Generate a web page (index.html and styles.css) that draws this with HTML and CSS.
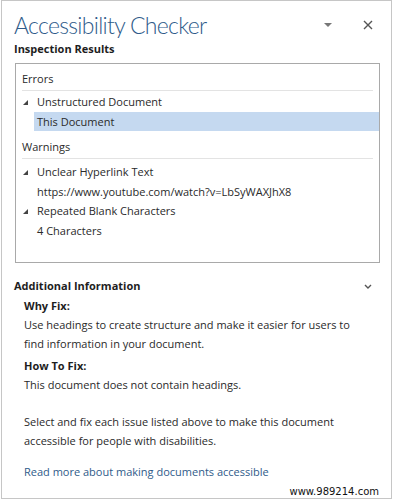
FILE: index.html
```html
<!DOCTYPE html>
<html>
<head>
<meta charset="utf-8">
<link rel="stylesheet" href="styles.css">
</head>
<body>
<div class="pane">
  <div class="header">
    <div class="title">Accessibility Checker</div>
    <div class="ctrls">
      <svg class="drop" width="10" height="6" viewBox="0 0 10 6"><path d="M1 1 L9 1 L5 5 Z" fill="#777"/></svg>
      <svg class="close" width="10" height="10" viewBox="0 0 10 10"><path d="M1 1 L9 9 M9 1 L1 9" stroke="#555" stroke-width="1.4"/></svg>
    </div>
  </div>
  <div class="section-title">Inspection Results</div>
  <div class="listbox">
    <div class="group">Errors</div>
    <div class="item"><span class="tri"></span>Unstructured Document</div>
    <div class="sub selected">This Document</div>
    <div class="group warn">Warnings</div>
    <div class="item"><span class="tri"></span>Unclear Hyperlink Text</div>
    <div class="sub">https://www.youtube.com/watch?v=LbSyWAXJhX8</div>
    <div class="item"><span class="tri"></span>Repeated Blank Characters</div>
    <div class="sub">4 Characters</div>
  </div>
  <div class="info-head">
    <div class="section-title">Additional Information</div>
    <svg class="chev" width="8" height="5" viewBox="0 0 8 5"><path d="M1 1 L4 4 L7 1" stroke="#555" stroke-width="1.4" fill="none"/></svg>
  </div>
  <div class="info">
    <div class="label first">Why Fix:</div>
    <p>Use headings to create structure and make it easier for users to find information in your document.</p>
    <div class="label">How To Fix:</div>
    <p>This document does not contain headings.</p>
    <p class="gap">Select and fix each issue listed above to make this document accessible for people with disabilities.</p>
    <a class="link">Read more about making documents accessible</a>
  </div>
  <div class="wm">www.989214.com</div>
</div>
</body>
</html>
```
FILE: styles.css
```css
html, body { margin: 0; padding: 0; background: #fff; }
body { width: 393px; height: 500px; overflow: hidden; }
.pane {
  box-sizing: border-box;
  width: 391px;
  height: 499px;
  margin-left: 1px;
  border: 1px solid #c6c6c6;
  font-family: "Open Sans", sans-serif;
  font-size: 11px;
  color: #2a2a2a;
  position: relative;
}
.header {
  display: flex;
  justify-content: space-between;
  align-items: flex-start;
  padding: 0 18px 0 12px;
  height: 29px;
  margin-top: 10px;
}
.title {
  font-family: Lato, sans-serif;
  font-weight: 300;
  font-size: 23px;
  letter-spacing: -0.7px;
  line-height: 28px;
  color: #2f5b8a;
}
.ctrls { display: flex; align-items: center; gap: 30px; height: 28px; }
.section-title {
  font-weight: 700;
  font-size: 11px;
  padding-left: 12px;
  line-height: 18px;
  color: #1e1e1e;
}
.listbox {
  margin: 5px 11px 0 13px;
  height: 200px;
  box-sizing: border-box;
  border: 1px solid #a9a9a9;
  padding: 4px 0 0 0;
}
.group {
  margin: 0 6px 1px 6px;
  line-height: 22px;
  border-bottom: 1px solid #e3e3e3;
}
.group.warn { margin-top: 5px; margin-bottom: 3px; }
.item {
  line-height: 20px;
  padding-left: 7px;
  display: flex;
  align-items: center;
}
.tri {
  width: 0; height: 0;
  border-left: 5px solid transparent;
  border-bottom: 5px solid #444;
  margin-right: 9px;
}
.sub {
  line-height: 19px;
  margin-left: 18px;
  padding-left: 3px;
}
.selected { background: #c5d9f0; }
.info-head {
  display: flex;
  justify-content: space-between;
  align-items: center;
  margin-top: 14px;
  padding-right: 19px;
}
.info { padding-left: 22px; padding-right: 24px; }
.label { font-weight: 700; line-height: 19px; margin-top: 3px; color: #1e1e1e; }
.label.first { margin-top: 1px; }
.info p { margin: 0; line-height: 19px; }
.info p.gap { margin-top: 18px; }
.link {
  display: block;
  color: #2f5b8a;
  margin-top: 12px;
  line-height: 19px;
}
.wm {
  position: absolute;
  right: 12px;
  bottom: 1px;
  font-family: "DejaVu Sans", Verdana, sans-serif;
  font-size: 10px;
  color: #111;
}
```
